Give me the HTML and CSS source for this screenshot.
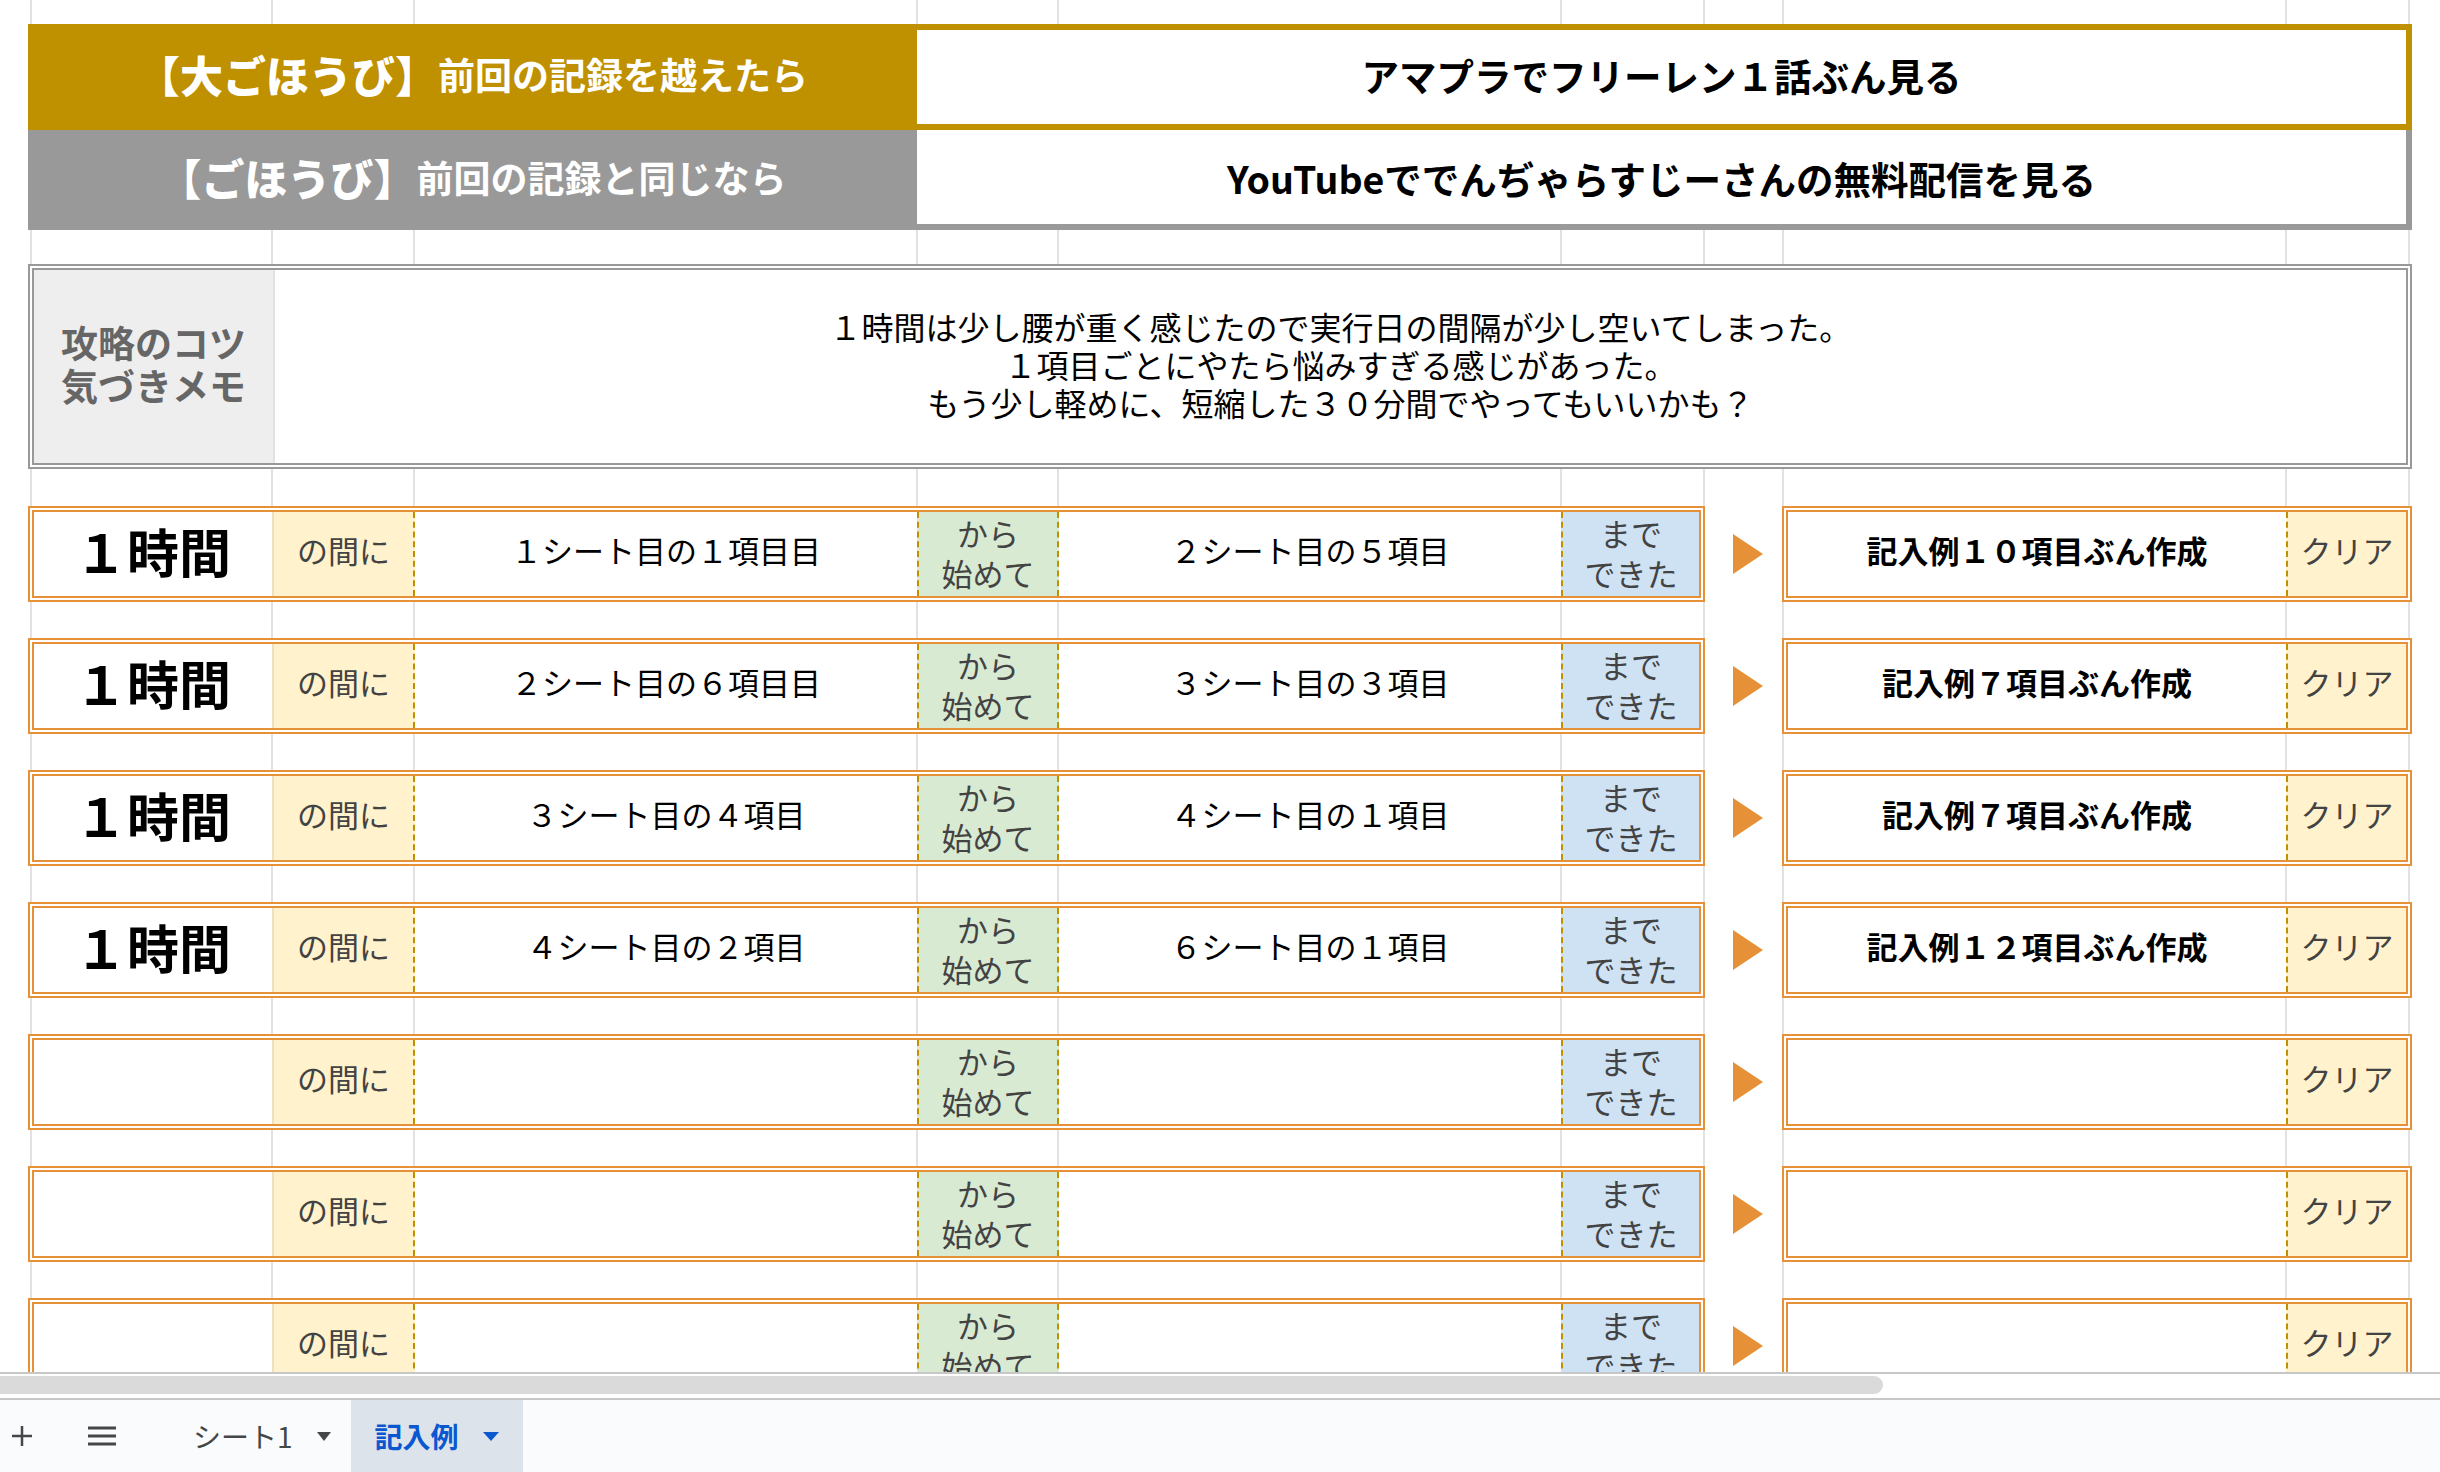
FILE: index.html
```html
<!DOCTYPE html>
<html lang="ja">
<head>
    <meta charset="UTF-8">
    <meta name="viewport" content="width=device-width, initial-scale=1.0">
    <title>記入例 - 時間割チャレンジ</title>
    <link rel="stylesheet" href="styles.css">
</head>
<body>
    <div class="sheet">
        <!-- Rewards -->
        <section class="rewards">
            <div class="reward reward-big">
                <div class="reward-label"><strong>【大ごほうび】</strong>前回の記録を越えたら</div>
                <div class="reward-value">アマプラでフリーレン１話ぶん見る</div>
            </div>
            <div class="reward reward-small">
                <div class="reward-label"><strong>【ごほうび】</strong>前回の記録と同じなら</div>
                <div class="reward-value">YouTubeででんぢゃらすじーさんの無料配信を見る</div>
            </div>
        </section>

        <!-- Memo -->
        <section class="memo">
            <div class="memo-label">攻略のコツ<br>気づきメモ</div>
            <div class="memo-text">
                １時間は少し腰が重く感じたので実行日の間隔が少し空いてしまった。<br>
                １項目ごとにやたら悩みすぎる感じがあった。<br>
                もう少し軽めに、短縮した３０分間でやってもいいかも？
            </div>
        </section>

        <!-- Task rows -->
        <section class="tasks">
            <div class="task">
                <div class="task-main">
                    <div class="cell cell-time">１時間</div>
                    <div class="cell cell-word cell-between">の間に</div>
                    <div class="cell">１シート目の１項目目</div>
                    <div class="cell cell-word cell-from">から<br>始めて</div>
                    <div class="cell">２シート目の５項目</div>
                    <div class="cell cell-word cell-until">まで<br>できた</div>
                </div>
                <div class="task-arrow"><svg width="30" height="40" viewBox="0 0 30 40"><polygon points="0,0 30,20 0,40"/></svg></div>
                <div class="task-result">
                    <div class="cell cell-goal">記入例１０項目ぶん作成</div>
                    <div class="cell cell-word cell-clear">クリア</div>
                </div>
            </div>
            <div class="task">
                <div class="task-main">
                    <div class="cell cell-time">１時間</div>
                    <div class="cell cell-word cell-between">の間に</div>
                    <div class="cell">２シート目の６項目目</div>
                    <div class="cell cell-word cell-from">から<br>始めて</div>
                    <div class="cell">３シート目の３項目</div>
                    <div class="cell cell-word cell-until">まで<br>できた</div>
                </div>
                <div class="task-arrow"><svg width="30" height="40" viewBox="0 0 30 40"><polygon points="0,0 30,20 0,40"/></svg></div>
                <div class="task-result">
                    <div class="cell cell-goal">記入例７項目ぶん作成</div>
                    <div class="cell cell-word cell-clear">クリア</div>
                </div>
            </div>
            <div class="task">
                <div class="task-main">
                    <div class="cell cell-time">１時間</div>
                    <div class="cell cell-word cell-between">の間に</div>
                    <div class="cell">３シート目の４項目</div>
                    <div class="cell cell-word cell-from">から<br>始めて</div>
                    <div class="cell">４シート目の１項目</div>
                    <div class="cell cell-word cell-until">まで<br>できた</div>
                </div>
                <div class="task-arrow"><svg width="30" height="40" viewBox="0 0 30 40"><polygon points="0,0 30,20 0,40"/></svg></div>
                <div class="task-result">
                    <div class="cell cell-goal">記入例７項目ぶん作成</div>
                    <div class="cell cell-word cell-clear">クリア</div>
                </div>
            </div>
            <div class="task">
                <div class="task-main">
                    <div class="cell cell-time">１時間</div>
                    <div class="cell cell-word cell-between">の間に</div>
                    <div class="cell">４シート目の２項目</div>
                    <div class="cell cell-word cell-from">から<br>始めて</div>
                    <div class="cell">６シート目の１項目</div>
                    <div class="cell cell-word cell-until">まで<br>できた</div>
                </div>
                <div class="task-arrow"><svg width="30" height="40" viewBox="0 0 30 40"><polygon points="0,0 30,20 0,40"/></svg></div>
                <div class="task-result">
                    <div class="cell cell-goal">記入例１２項目ぶん作成</div>
                    <div class="cell cell-word cell-clear">クリア</div>
                </div>
            </div>
            <div class="task">
                <div class="task-main">
                    <div class="cell cell-time"></div>
                    <div class="cell cell-word cell-between">の間に</div>
                    <div class="cell"></div>
                    <div class="cell cell-word cell-from">から<br>始めて</div>
                    <div class="cell"></div>
                    <div class="cell cell-word cell-until">まで<br>できた</div>
                </div>
                <div class="task-arrow"><svg width="30" height="40" viewBox="0 0 30 40"><polygon points="0,0 30,20 0,40"/></svg></div>
                <div class="task-result">
                    <div class="cell cell-goal"></div>
                    <div class="cell cell-word cell-clear">クリア</div>
                </div>
            </div>
            <div class="task">
                <div class="task-main">
                    <div class="cell cell-time"></div>
                    <div class="cell cell-word cell-between">の間に</div>
                    <div class="cell"></div>
                    <div class="cell cell-word cell-from">から<br>始めて</div>
                    <div class="cell"></div>
                    <div class="cell cell-word cell-until">まで<br>できた</div>
                </div>
                <div class="task-arrow"><svg width="30" height="40" viewBox="0 0 30 40"><polygon points="0,0 30,20 0,40"/></svg></div>
                <div class="task-result">
                    <div class="cell cell-goal"></div>
                    <div class="cell cell-word cell-clear">クリア</div>
                </div>
            </div>
            <div class="task">
                <div class="task-main">
                    <div class="cell cell-time"></div>
                    <div class="cell cell-word cell-between">の間に</div>
                    <div class="cell"></div>
                    <div class="cell cell-word cell-from">から<br>始めて</div>
                    <div class="cell"></div>
                    <div class="cell cell-word cell-until">まで<br>できた</div>
                </div>
                <div class="task-arrow"><svg width="30" height="40" viewBox="0 0 30 40"><polygon points="0,0 30,20 0,40"/></svg></div>
                <div class="task-result">
                    <div class="cell cell-goal"></div>
                    <div class="cell cell-word cell-clear">クリア</div>
                </div>
            </div>
        </section>
    </div>

    <div class="hscroll"><div class="hscroll-thumb"></div></div>

    <!-- Sheet tabs -->
    <footer class="tabs">
        <div class="tab-icon tab-add">
            <svg width="22" height="22" viewBox="0 0 22 22"><path d="M11 1v20M1 11h20"/></svg>
        </div>
        <div class="tab-icon tab-list">
            <svg width="28" height="20" viewBox="0 0 28 20"><path d="M0 2h28M0 10h28M0 18h28"/></svg>
        </div>
        <div class="tab">シート1<svg class="caret" width="14" height="9" viewBox="0 0 14 9"><polygon points="0,0 14,0 7,9"/></svg></div>
        <div class="tab active">記入例<svg class="caret" width="16" height="9" viewBox="0 0 16 9"><polygon points="0,0 16,0 8,9"/></svg></div>
    </footer>
</body>
</html>
```

FILE: styles.css
```css
* {
    box-sizing: border-box;
    margin: 0;
    padding: 0;
}

:root {
    --gold: #bf9000;
    --gray: #999999;
    --orange: #e69138;
    --grid: #e2e2e3;
    --cream: #fff2cc;
    --mint: #d9ead3;
    --sky: #cfe2f3;
    --label: #434343;
}

body {
    width: 2440px;
    height: 1472px;
    overflow: hidden;
    font-family: "Noto Sans CJK JP", "Noto Sans", sans-serif;
    color: #000;
    background: #fff;
}

/* spreadsheet area with its column lines */
.sheet {
    height: 1372px;
    overflow: hidden;
    padding: 24px 28px 0;
    background-color: #fff;
    background-image:
        linear-gradient(var(--grid), var(--grid)),
        linear-gradient(var(--grid), var(--grid)),
        linear-gradient(var(--grid), var(--grid)),
        linear-gradient(var(--grid), var(--grid)),
        linear-gradient(var(--grid), var(--grid)),
        linear-gradient(var(--grid), var(--grid)),
        linear-gradient(var(--grid), var(--grid)),
        linear-gradient(var(--grid), var(--grid)),
        linear-gradient(var(--grid), var(--grid)),
        linear-gradient(var(--grid), var(--grid));
    background-size: 2px 100%;
    background-repeat: no-repeat;
    background-position: 30px 0, 271px 0, 413px 0, 916px 0, 1057px 0, 1560px 0, 1703px 0, 1782px 0, 2285px 0, 2408px 0;
}

/* rewards */
.reward {
    display: flex;
}

.reward-big {
    height: 106px;
}

.reward-small {
    height: 100px;
}

.reward-label {
    width: 889px;
    display: flex;
    align-items: center;
    justify-content: center;
    padding-bottom: 6px;
    color: #fff;
    font-weight: 700;
    font-size: 37px;
}

.reward-label strong {
    font-size: 43px;
}

.reward-big .reward-label {
    background: var(--gold);
}

.reward-small .reward-label {
    background: var(--gray);
}

.reward-value {
    flex: 1;
    display: flex;
    align-items: center;
    justify-content: center;
    padding-bottom: 6px;
    background: #fff;
    font-weight: 700;
    font-size: 37.5px;
}

.reward-big .reward-value {
    border: 6px solid var(--gold);
    border-left: 0;
}

.reward-small .reward-value {
    padding-bottom: 0;
    border-right: 6px solid var(--gray);
    border-bottom: 6px solid var(--gray);
}

/* memo */
.memo {
    margin-top: 34px;
    height: 205px;
    display: flex;
    border: 6px double var(--gray);
    background: #fff;
}

.memo-label {
    width: 241px;
    display: flex;
    align-items: center;
    justify-content: center;
    padding-bottom: 5px;
    text-align: center;
    background: #eeeeee;
    border-right: 2px solid var(--grid);
    color: #666666;
    font-weight: 700;
    font-size: 37px;
    line-height: 43px;
}

.memo-text {
    flex: 1;
    display: flex;
    align-items: center;
    justify-content: center;
    padding-bottom: 5px;
    text-align: center;
    font-size: 32px;
    line-height: 38px;
}

/* task rows */
.tasks {
    margin-top: 37px;
    display: flex;
    flex-direction: column;
    gap: 36px;
}

.task {
    display: flex;
    height: 96px;
    flex-shrink: 0;
}

.task-main {
    width: 1677px;
    display: grid;
    grid-template-columns: 238px 143px 502px 142px 502px 138px;
    border: 6px double var(--orange);
    background: #fff;
}

.task-arrow {
    width: 77px;
    padding-left: 8px;
    display: flex;
    align-items: center;
    justify-content: center;
}

.task-arrow svg {
    fill: var(--orange);
}

.task-result {
    flex: 1;
    display: grid;
    grid-template-columns: 498px 120px;
    border: 6px double var(--orange);
    background: #fff;
}

.cell {
    display: flex;
    align-items: center;
    justify-content: center;
    padding-bottom: 8px;
    text-align: center;
    font-size: 31px;
    line-height: 40px;
}

.cell-time {
    padding-bottom: 6px;
    font-size: 52px;
    font-weight: 700;
}

.cell-goal {
    font-weight: 700;
}

.cell-word {
    color: var(--label);
}

.cell-between {
    background: var(--cream);
    border-left: 2px solid #ebe2c3;
    border-right: 2px dashed var(--gold);
}

.cell-from {
    padding-bottom: 3px;
    background: var(--mint);
    border-left: 2px dashed var(--gold);
    border-right: 2px dashed var(--gold);
}

.cell-until {
    padding-bottom: 3px;
    background: var(--sky);
    border-left: 2px dashed var(--gold);
}

.cell-clear {
    background: var(--cream);
    border-left: 2px dashed var(--gold);
}

/* horizontal scrollbar */
.hscroll {
    height: 28px;
    padding-top: 2px;
    border-top: 2px solid #c7c7c7;
    border-bottom: 2px solid #c7c7c7;
    background: #fff;
}

.hscroll-thumb {
    width: 1883px;
    height: 18px;
    background: #dadada;
    border-radius: 0 9px 9px 0;
}

/* sheet tabs */
.tabs {
    height: 72px;
    display: flex;
    background: #f9fbfd;
    color: #444746;
}

.tab-icon {
    display: flex;
    align-items: center;
    justify-content: center;
}

.tab-icon svg {
    stroke: #444746;
    fill: none;
}

.tab-add {
    width: 44px;
}

.tab-add svg {
    stroke-width: 2.5;
}

.tab-list {
    width: 116px;
}

.tab-list svg {
    stroke-width: 3;
}

.tab {
    display: flex;
    align-items: center;
    padding: 0 20px 0 33px;
    font-size: 28px;
    gap: 24px;
}

.tab .caret {
    fill: #444746;
}

.tab.active {
    padding: 0 24px;
    background: #dde3ea;
    color: #0b57d0;
    font-weight: 700;
}

.tab.active .caret {
    fill: #0b57d0;
}
```
